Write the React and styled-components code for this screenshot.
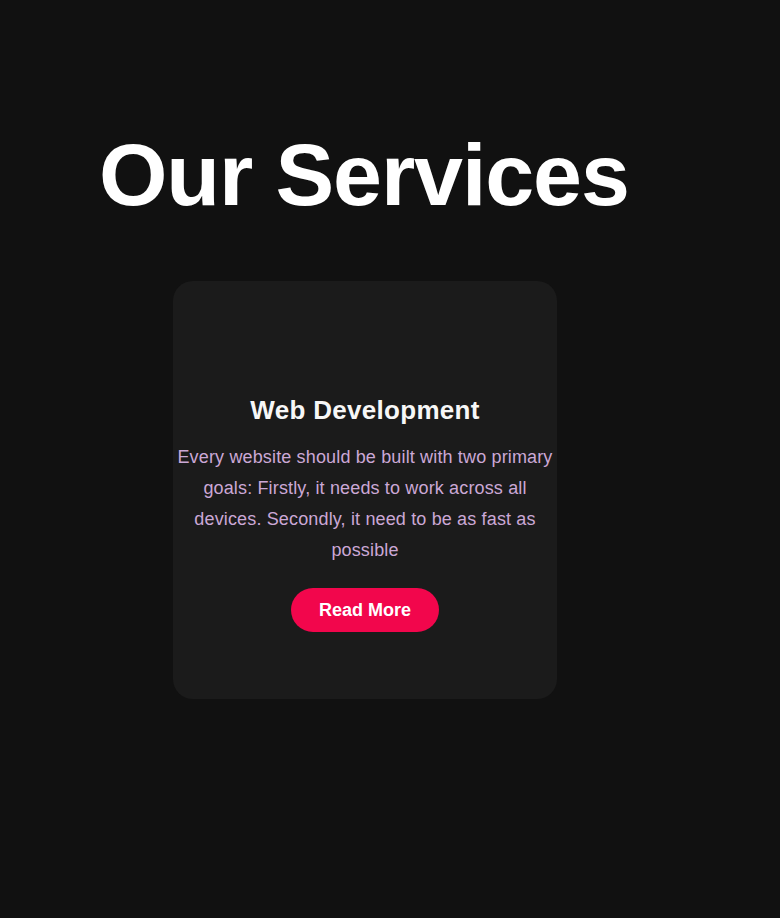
import React from 'react'
import styled, { createGlobalStyle } from 'styled-components'

const GlobalStyle = createGlobalStyle`
  html, body {
    margin: 0;
    padding: 0;
    background-color: #111111;
    font-family: "Liberation Sans", Arial, sans-serif;
  }
  * {
    box-sizing: border-box;
  }
`;

const services = [
  {
    title: 'Web Development',
    text: 'Every website should be built with two primary goals: Firstly, it needs to work across all devices. Secondly, it need to be as fast as possible',
  },
]

const App = () => {
  return (
    <>
      <GlobalStyle />
      <Page>
        <Section>
          <Title>Our Services</Title>
          <CardRow>
            {services.map((item, i) => {
              return (
                <Card key={i}>
                  <CardTitle>{item.title}</CardTitle>
                  <CardText>{item.text}</CardText>
                  <Button>Read More</Button>
                </Card>
              )
            })}
          </CardRow>
        </Section>
      </Page>
    </>
  )
}

const Page = styled.div`
  min-height: 918px;
  background-color: #111111;
  color: #fff;
`;

const Section = styled.section`
  display: flex;
  flex-direction: column;
  align-items: flex-start;
  padding: 124px 0 0 99px;
`;

const Title = styled.h1`
  margin: 0;
  font-size: 88px;
  font-weight: 700;
  line-height: normal;
  letter-spacing: -1.1px;
  color: #ffffff;
`;

const CardRow = styled.div`
  width: 532px;
  display: flex;
  justify-content: center;
  margin-top: 55px;
`;

const Card = styled.div`
  width: 384px;
  padding: 114px 4px 67px;
  background-color: #1b1b1b;
  border-radius: 20px;
  display: flex;
  flex-direction: column;
  align-items: center;
  text-align: center;
`;

const CardTitle = styled.h3`
  margin: 0 0 16px;
  font-size: 26px;
  font-weight: 700;
  line-height: normal;
  letter-spacing: 0.3px;
  color: #f7f7f7;
`;

const CardText = styled.p`
  margin: 0 0 22px;
  font-size: 18px;
  line-height: 31px;
  letter-spacing: 0.15px;
  color: #cba8d6;
`;

const Button = styled.button`
  border: 0;
  outline: 0;
  padding: 12px 28px;
  border-radius: 22px;
  background-color: #f2064c;
  color: #fff;
  font-family: "Liberation Sans", Arial, sans-serif;
  font-size: 18px;
  font-weight: 700;
  line-height: 20px;
  cursor: pointer;
`;

export default App
